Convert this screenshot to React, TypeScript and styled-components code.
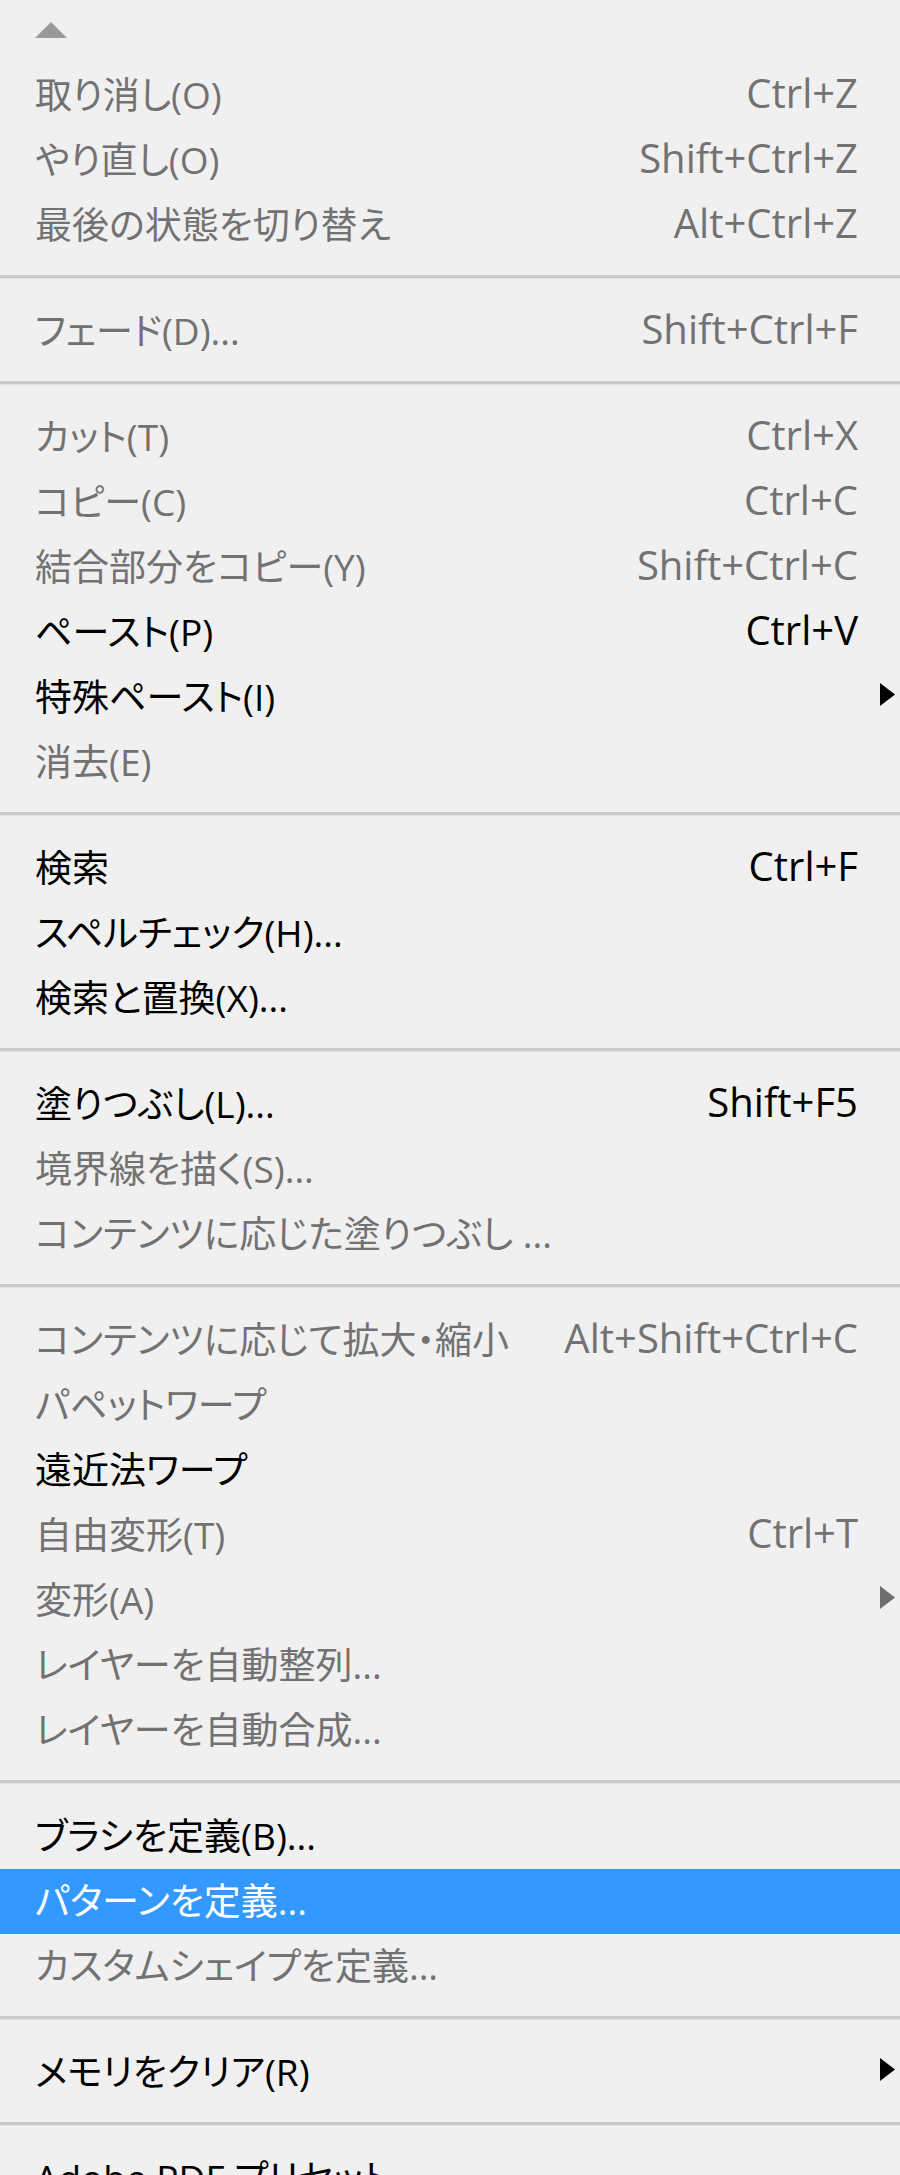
import React from 'react';
import styled, { createGlobalStyle } from 'styled-components';

/*
    編集メニュー (Photoshop 風)
    無効項目はグレー、選択中の項目は青背景
*/

type Item = {
  label: string;
  shortcut?: string;
  enabled?: boolean;
  submenu?: boolean;
  active?: boolean;
};

const groups: Item[][] = [
  [
    { label: '取り消し(O)', shortcut: 'Ctrl+Z' },
    { label: 'やり直し(O)', shortcut: 'Shift+Ctrl+Z' },
    { label: '最後の状態を切り替え', shortcut: 'Alt+Ctrl+Z' },
  ],
  [{ label: 'フェード(D)...', shortcut: 'Shift+Ctrl+F' }],
  [
    { label: 'カット(T)', shortcut: 'Ctrl+X' },
    { label: 'コピー(C)', shortcut: 'Ctrl+C' },
    { label: '結合部分をコピー(Y)', shortcut: 'Shift+Ctrl+C' },
    { label: 'ペースト(P)', shortcut: 'Ctrl+V', enabled: true },
    { label: '特殊ペースト(I)', enabled: true, submenu: true },
    { label: '消去(E)' },
  ],
  [
    { label: '検索', shortcut: 'Ctrl+F', enabled: true },
    { label: 'スペルチェック(H)...', enabled: true },
    { label: '検索と置換(X)...', enabled: true },
  ],
  [
    { label: '塗りつぶし(L)...', shortcut: 'Shift+F5', enabled: true },
    { label: '境界線を描く(S)...' },
    { label: 'コンテンツに応じた塗りつぶし ...' },
  ],
  [
    { label: 'コンテンツに応じて拡大・縮小', shortcut: 'Alt+Shift+Ctrl+C' },
    { label: 'パペットワープ' },
    { label: '遠近法ワープ', enabled: true },
    { label: '自由変形(T)', shortcut: 'Ctrl+T' },
    { label: '変形(A)', submenu: true },
    { label: 'レイヤーを自動整列...' },
    { label: 'レイヤーを自動合成...' },
  ],
  [
    { label: 'ブラシを定義(B)...', enabled: true },
    { label: 'パターンを定義...', enabled: true, active: true },
    { label: 'カスタムシェイプを定義...' },
  ],
  [{ label: 'メモリをクリア(R)', enabled: true, submenu: true }],
  [{ label: 'Adobe PDF プリセット...', enabled: true }],
];

function colorOf(item: Item) {
  if (item.active) return '#ffffff';
  return item.enabled ? '#000000' : '#727272';
}

function EditMenu() {
  return (
    <Menu>
      <ScrollRow>
        <ScrollUp />
      </ScrollRow>
      {groups.map((group, gi) => (
        <React.Fragment key={gi}>
          {gi > 0 && <Separator />}
          {group.map(item => (
            <Row key={item.label} active={!!item.active} color={colorOf(item)}>
              <Label>{item.label}</Label>
              <Shortcut>{item.shortcut}</Shortcut>
              <ArrowCell>
                {item.submenu && (
                  <svg width="15" height="23" viewBox="0 0 15 23">
                    <path d="M0 0 L15 11.5 L0 23 Z" fill={item.enabled ? '#000' : '#6e6e6e'} />
                  </svg>
                )}
              </ArrowCell>
            </Row>
          ))}
        </React.Fragment>
      ))}
    </Menu>
  );
}

const GlobalStyle = createGlobalStyle`
  html, body {
    margin: 0;
    padding: 0;
    background: #f0f0f0;
    overflow: hidden;
  }
`;

const Menu = styled.div`
  width: 900px;
  height: 2175px;
  overflow: hidden;
  display: flex;
  flex-direction: column;
  background: #f0f0f0;
  font-family: 'Open Sans', 'Noto Sans CJK JP', sans-serif;
`;

const ScrollRow = styled.div`
  height: 63px;
  flex-shrink: 0;
  padding: 22px 0 0 35px;
  box-sizing: border-box;
`;

const ScrollUp = styled.div`
  width: 0;
  height: 0;
  border-left: 16.5px solid transparent;
  border-right: 16.5px solid transparent;
  border-bottom: 16px solid #999999;
`;

const Row = styled.div<{ active: boolean; color: string }>`
  height: 65px;
  flex-shrink: 0;
  box-sizing: border-box;
  display: grid;
  grid-template-columns: 1fr auto 42px;
  align-items: center;
  padding: 0 0 6px 35px;
  color: ${props => props.color};
  background: ${props => (props.active ? '#3399ff' : 'transparent')};
`;

const Label = styled.span`
  font-size: 37px;
  font-feature-settings: 'palt' 1;
  white-space: nowrap;
`;

const Shortcut = styled.span`
  font-size: 40px;
  white-space: nowrap;
`;

const ArrowCell = styled.div`
  display: flex;
  justify-content: flex-end;
  padding-right: 5px;
`;

const Separator = styled.div`
  flex-shrink: 0;
  height: 3px;
  margin: 17px 0 21px;
  background: #c8c8c8;
  box-shadow: 0 1px 0 #e2e2e2;
`;

export default function App() {
  return (
    <>
      <GlobalStyle />
      <EditMenu />
    </>
  );
}
